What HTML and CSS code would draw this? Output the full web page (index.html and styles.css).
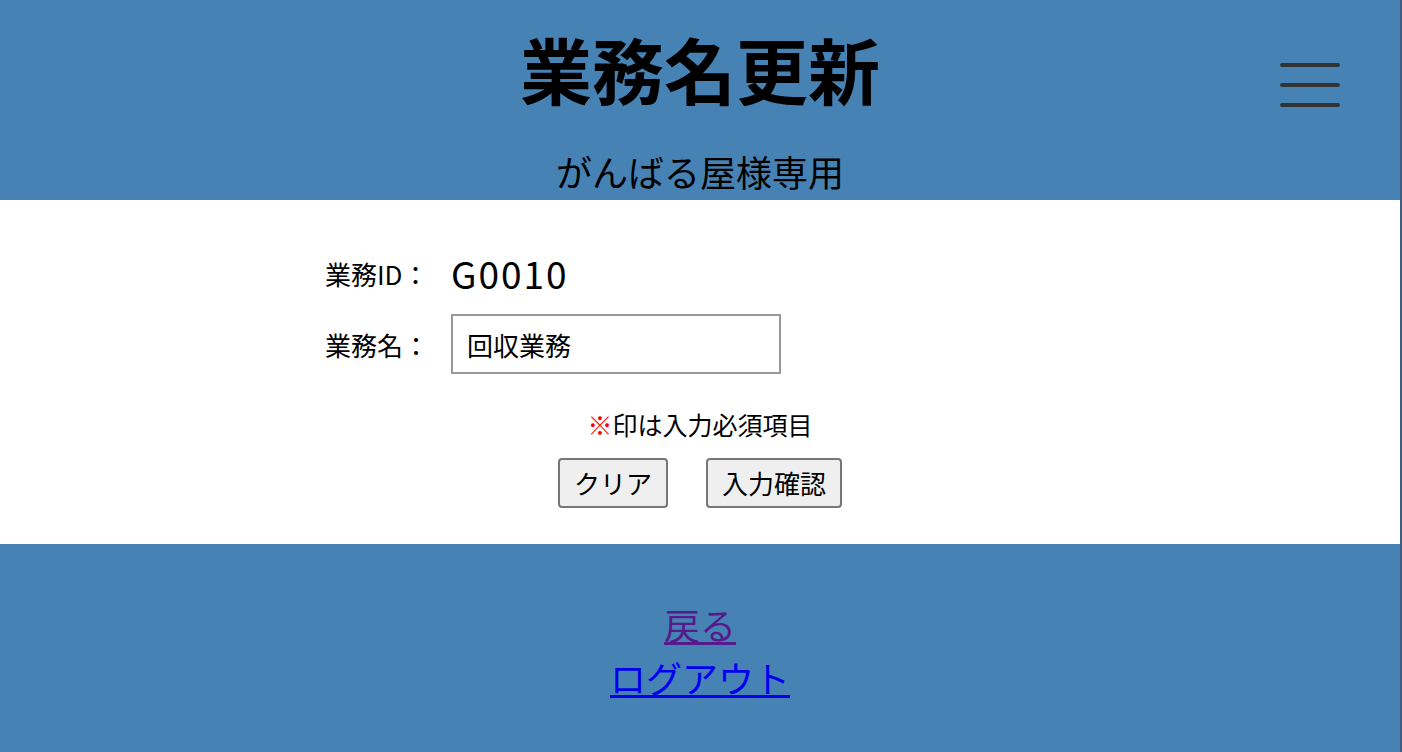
FILE: index.html
```html
<!DOCTYPE html>
<html lang="ja">
<head>
  <meta charset="UTF-8" />
  <meta name="viewport" content="width=device-width, initial-scale=1" />
  <title>業務名更新</title>
  <link rel="stylesheet" href="styles.css">
</head>
<body>
  <div class="page">
    <header class="header">
      <h1>業務名更新</h1>
      <p class="sous-titre">がんばる屋様専用</p>
      <button class="menu-btn" aria-label="menu">
        <span></span><span></span><span></span>
      </button>
    </header>

    <main class="contenu">
      <form class="form-table" onsubmit="return false;">
        <div class="label">業務ID：</div>
        <div class="valeur">G0010</div>
        <label class="label" for="gyomu-name">業務名：</label>
        <input type="text" id="gyomu-name" value="回収業務">
      </form>

      <p class="note"><span class="rouge">※</span>印は入力必須項目</p>

      <div class="actions">
        <button type="button" class="btn">クリア</button>
        <button type="button" class="btn">入力確認</button>
      </div>
    </main>

    <footer class="footer">
      <a href="#" class="visite">戻る</a>
      <a href="#">ログアウト</a>
    </footer>
  </div>
</body>
</html>
```

FILE: styles.css
```css
html {
  background: #3d5d82;
}
body {
  margin: 0;
  font-family: "Noto Sans CJK JP", "Noto Sans", sans-serif;
  color: #000;
}
.page {
  margin-right: 2px;
  background: #fff;
}
.header {
  position: relative;
  background: #4682b4;
  text-align: center;
  padding: 18px 0 4px;
}
.header h1 {
  margin: 0;
  font-size: 72px;
  line-height: 100px;
  font-weight: 700;
}
.sous-titre {
  margin: 28px 0 0;
  font-size: 36px;
  line-height: 50px;
}
.menu-btn {
  position: absolute;
  top: 63px;
  right: 60px;
  width: 60px;
  height: 44px;
  padding: 0;
  border: none;
  background: none;
  display: flex;
  flex-direction: column;
  justify-content: space-between;
  cursor: pointer;
}
.menu-btn span {
  display: block;
  height: 4px;
  border-radius: 2px;
  background: #333;
}
.contenu {
  padding: 48px 0 36px;
}
.form-table {
  display: grid;
  grid-template-columns: 126px auto;
  row-gap: 16px;
  align-items: center;
  margin-left: 325px;
  width: max-content;
}
.label {
  font-size: 26px;
}
.valeur {
  font-size: 37px;
  letter-spacing: 2px;
  line-height: 50px;
}
.form-table input {
  width: 330px;
  height: 60px;
  box-sizing: border-box;
  border: 2px solid #999;
  padding: 0 14px;
  font-family: inherit;
  font-size: 26px;
  color: #000;
}
.note {
  margin: 32px 0 0;
  text-align: center;
  font-size: 25px;
  line-height: 36px;
}
.rouge {
  color: #f00;
}
.actions {
  display: flex;
  justify-content: center;
  gap: 38px;
  margin-top: 16px;
}
.btn {
  font-family: inherit;
  font-size: 26px;
  line-height: 46px;
  height: 50px;
  padding: 0 14px;
  background: #efefef;
  border: 2px solid #767676;
  border-radius: 4px;
  color: #000;
}
.footer {
  background: #4682b4;
  display: flex;
  flex-direction: column;
  align-items: center;
  padding: 54px 0 48px;
  font-size: 36px;
  line-height: 53px;
}
.footer a {
  color: #0000ee;
}
.footer a.visite {
  color: #551a8b;
}
```
